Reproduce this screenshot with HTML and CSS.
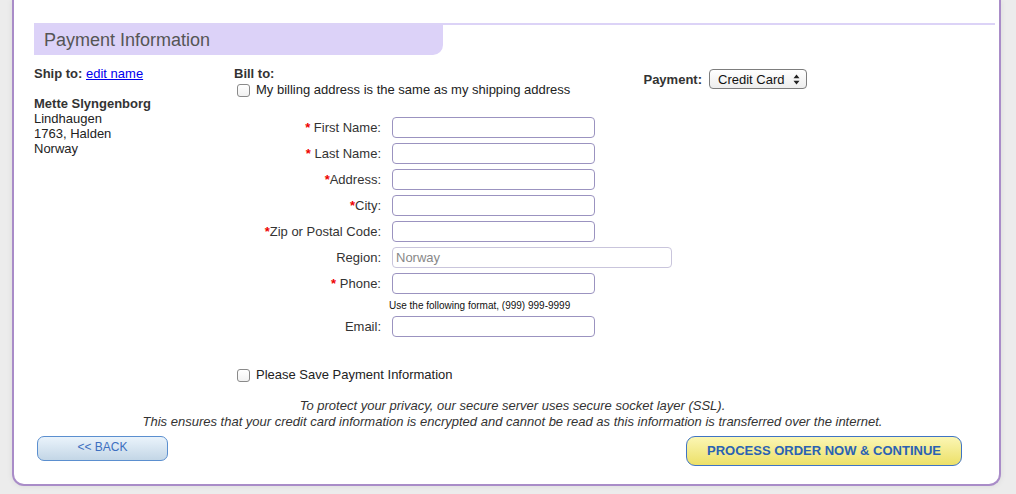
FILE: index.html
```html
<!DOCTYPE html>
<html>
<head>
<meta charset="utf-8">
<link rel="stylesheet" href="styles.css">
</head>
<body>
<div class="page">
  <div class="section-head">
    <div class="tab">Payment Information</div>
  </div>
  <div class="content">
    <div class="ship">
      <div class="ship-title"><b>Ship to:</b> <a href="#">edit name</a></div>
      <div class="address">
        <b>Mette Slyngenborg</b><br>
        Lindhaugen<br>
        1763, Halden<br>
        Norway
      </div>
    </div>
    <div class="bill">
      <div class="bill-head">
        <div>
          <div class="bill-title"><b>Bill to:</b></div>
          <label class="check first"><span class="box"></span>My billing address is the same as my shipping address</label>
        </div>
        <div class="payment">
          <b>Payment:</b>
          <div class="select">Credit Card<svg width="7" height="11" viewBox="0 0 7 11"><path d="M3.5 0.5 L6.5 4.3 L0.5 4.3 Z M3.5 10.5 L6.5 6.7 L0.5 6.7 Z" fill="#222"/></svg></div>
        </div>
      </div>
      <div class="form">
        <div class="lbl"><span class="req">*</span> First Name:</div><div class="field"><span class="input"></span></div>
        <div class="lbl"><span class="req">*</span> Last Name:</div><div class="field"><span class="input"></span></div>
        <div class="lbl"><span class="req">*</span>Address:</div><div class="field"><span class="input"></span></div>
        <div class="lbl"><span class="req">*</span>City:</div><div class="field"><span class="input"></span></div>
        <div class="lbl"><span class="req">*</span>Zip or Postal Code:</div><div class="field"><span class="input"></span></div>
        <div class="lbl">Region:</div><div class="field"><span class="input wide">Norway</span></div>
        <div class="lbl"><span class="req">*</span> Phone:</div><div class="field"><span class="input"></span></div>
        <div class="lbl"></div><div class="hint">Use the following format, (999) 999-9999</div>
        <div class="lbl">Email:</div><div class="field"><span class="input"></span></div>
      </div>
      <label class="check save"><span class="box"></span>Please Save Payment Information</label>
    </div>
  </div>
  <div class="ssl">
    To protect your privacy, our secure server uses secure socket layer (SSL).<br>
    This ensures that your credit card information is encrypted and cannot be read as this information is transferred over the internet.
  </div>
  <div class="actions">
    <div class="btn back">&lt;&lt; BACK</div>
    <div class="btn process">PROCESS ORDER NOW &amp; CONTINUE</div>
  </div>
</div>
</body>
</html>
```

FILE: styles.css
```css
html, body {
  margin: 0;
  padding: 0;
}
body {
  background: #ececec;
  font-family: "Liberation Sans", Arial, Helvetica, sans-serif;
  font-size: 13px;
  color: #222;
  width: 1016px;
  height: 494px;
  overflow: hidden;
}
.page {
  box-sizing: border-box;
  margin-left: 12px;
  width: 989px;
  height: 486px;
  background: #fff;
  border: 2px solid #a98cc8;
  border-top: none;
  border-radius: 0 0 12px 12px;
  box-shadow: 0 0 6px rgba(0, 0, 0, 0.08);
  padding: 23px 4px 0 20px;
}
.section-head {
  border-top: 2px solid #dcd3f7;
}
.tab {
  width: 409px;
  height: 30px;
  box-sizing: border-box;
  background: #dcd2f8;
  border-bottom-right-radius: 10px;
  color: #555;
  font-size: 18px;
  line-height: 30px;
  padding-left: 10px;
}
.content {
  display: flex;
  padding-top: 11px;
}
.ship {
  width: 200px;
  line-height: 15px;
}
.ship-title {
  margin-bottom: 15px;
}
.ship a {
  color: #0000ee;
  text-decoration: underline;
}
.ship b {
  color: #333;
}
.address {
  color: #222;
}
.bill {
  flex: none;
}
.bill-head {
  width: 573px;
  display: flex;
  justify-content: space-between;
}
.bill-title {
  line-height: 15px;
  color: #333;
}
.check {
  display: flex;
  align-items: center;
  line-height: 16px;
  color: #222;
}
.check.first {
  margin-top: 1px;
}
.box {
  width: 11px;
  height: 11px;
  border: 1px solid #8a8a8a;
  border-radius: 3px;
  background: linear-gradient(#fff, #f1f1f1);
  margin: 0 6px 0 3px;
  flex: none;
}
.payment {
  display: flex;
  align-items: center;
  gap: 7px;
  margin-top: 3px;
  align-self: flex-start;
  color: #333;
}
.select {
  box-sizing: border-box;
  width: 98px;
  height: 20px;
  border: 1px solid #7d7d7d;
  border-radius: 4px;
  background: linear-gradient(#ffffff, #ededed);
  display: flex;
  align-items: center;
  justify-content: space-between;
  padding: 0 6px 0 8px;
  color: #111;
  font-size: 13px;
}
.form {
  display: grid;
  grid-template-columns: 147px 1fr;
  column-gap: 11px;
  row-gap: 5px;
  margin-top: 19px;
}
.lbl {
  text-align: right;
  color: #333;
  line-height: 21px;
  white-space: nowrap;
}
.req {
  color: #e00;
  font-weight: bold;
}
.input {
  display: block;
  box-sizing: border-box;
  width: 203px;
  height: 21px;
  border: 1px solid #9b93c0;
  border-radius: 4px;
  background: #fff;
}
.input.wide {
  width: 280px;
  border-color: #c9c5dc;
  color: #888;
  line-height: 19px;
  padding-left: 3px;
}
.hint {
  font-size: 10px;
  line-height: 11px;
  color: #111;
  margin-left: -3px;
  padding-top: 1px;
  white-space: nowrap;
}
.save {
  margin-top: 30px;
}
.ssl {
  text-align: center;
  font-style: italic;
  color: #333;
  line-height: 16px;
  margin-top: 15px;
  padding-right: 4px;
}
.actions {
  display: flex;
  justify-content: space-between;
  align-items: flex-start;
  margin-top: 6px;
  padding-left: 3px;
  padding-right: 33px;
}
.btn {
  box-sizing: border-box;
  text-align: center;
  border-radius: 7px;
}
.back {
  width: 131px;
  height: 25px;
  line-height: 21px;
  border: 1px solid #5b8fcf;
  background: linear-gradient(#eaf3fb, #c3d6e6);
  color: #3c6fc0;
  font-size: 12px;
}
.process {
  width: 276px;
  height: 30px;
  line-height: 27px;
  border: 1px solid #3f74c4;
  background: linear-gradient(#fbf6b4, #ece068);
  color: #2a62b3;
  font-size: 13px;
  font-weight: bold;
  border-radius: 9px;
}
```
